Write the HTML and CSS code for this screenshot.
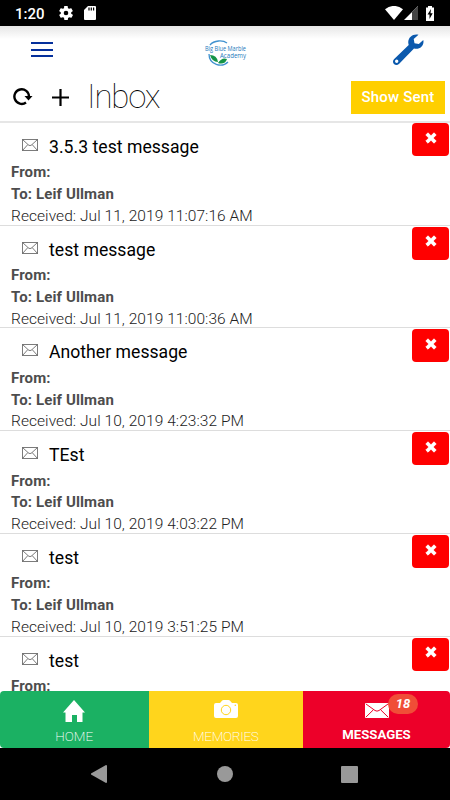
FILE: index.html
```html
<!DOCTYPE html>
<html lang="en">
<head>
  <meta charset="utf-8">
  <title>Inbox</title>
  <meta name="viewport" content="width=device-width, initial-scale=1.0">
  <link rel="stylesheet" href="styles.css">
</head>
<body>
  <svg class="symbols">
    <symbol id="envelope" viewBox="0 0 16 12">
      <path d="M.5.5h15v11H.5zM.5.5 6.5 6Q8 7.3 9.5 6L15.5.5M.5 11.5 5.8 5.6M15.5 11.5 10.2 5.6" fill="none" stroke="currentColor" stroke-width=".65"/>
    </symbol>
    <symbol id="times" viewBox="0 0 12 12">
      <path d="M3 .8 6 3.8 9 .8 11.2 3 8.2 6 11.2 9 9 11.2 6 8.2 3 11.2.8 9 3.8 6 .8 3z" fill="currentColor" stroke="currentColor" stroke-width=".8" stroke-linejoin="round"/>
    </symbol>
  </svg>

  <div class="status-bar">
    <span class="clock">1:20</span>
    <svg class="gear" width="14" height="14" viewBox="2 2 20 20"><path fill="#fff" d="M19.4 13c0-.3.1-.6.1-1s0-.7-.1-1l2.1-1.6c.2-.1.2-.4.1-.6l-2-3.500c-.1-.2-.4-.3-.6-.2l-2.500 1c-.5-.4-1.100-.7-1.700-1l-.4-2.600c0-.2-.2-.4-.5-.4h-4c-.2 0-.4.2-.5.4L9.200 5.100c-.6.2-1.200.6-1.700 1L5 5.100c-.2-.1-.5 0-.6.2l-2 3.500c-.1.2-.1.5.1.6L4.600 11c0 .3-.1.7-.1 1s0 .7.1 1l-2.100 1.600c-.2.1-.2.4-.1.600l2 3.500c.1.2.4.3.6.2l2.500-1c.5.4 1.100.7 1.700 1l.4 2.600c0 .2.2.5.5.5h4c.2 0 .5-.2.5-.5l.4-2.600c.6-.2 1.200-.6 1.700-1l2.500 1c.2.1.5 0 .6-.2l2-3.500c.1-.2.1-.5-.1-.6zM12 15.300a3.300 3.300 0 1 1 0-6.600 3.300 3.300 0 0 1 0 6.600z"/></svg>
    <svg class="sd-card" width="12" height="14" viewBox="0 0 12 14"><path fill="#fff" d="M4 0h7q1 0 1 1v12q0 1-1 1H1q-1 0-1-1V4z"/><path stroke="#000" stroke-width="1.2" d="M5 1.5v3M7.3 1.5v3M9.6 1.5v3"/></svg>
    <div class="status-right">
      <svg width="18" height="14" viewBox="0 0 18 14"><path fill="#fff" d="M0 3.2Q9-3.400 18 3.200L9 14z"/></svg>
      <svg width="14" height="14" viewBox="0 0 14 14"><path fill="#fff" d="M14 0v14H0z"/><path fill="#444" d="M8 6l6-6v14H8z"/></svg>
      <svg class="battery" width="8" height="15" viewBox="0 0 8 15"><path fill="#fff" d="M2 0h4v1.5h2V15H0V1.5h2z"/><path d="M5 3 1.5 8.500h2V13L6.700 7.200H4.500z"/></svg>
    </div>
  </div>

  <header class="top-bar">
    <div class="menu-icon"><span></span><span></span><span></span></div>
    <svg class="logo" width="44" height="28" viewBox="0 0 44 28">
      <path d="M5 4C9-1 18-1 22 2M4 13C4 24 17 27 23 21" fill="none" stroke="#3f91cf" stroke-width="1.300"/>
      <path d="M5 14q7 0 8 7-6 0-8-7zM13 22q4-6 9-4-2 6-9 4z" fill="#159447"/>
      <text x="0" y="9.5" textLength="41" lengthAdjust="spacingAndGlyphs">Big Blue Marble</text>
      <text x="15" y="17" textLength="26" lengthAdjust="spacingAndGlyphs">Academy</text>
    </svg>
    <svg class="wrench" width="32" height="32" viewBox="0 0 32 32">
      <path fill="#0b59ad" fill-rule="evenodd" d="M26.500.8 21.700 5l.8 4.300 4.300.8 4.500-4.200c1.200 5.400-3.300 10-9.300 8.600L7.200 29.800C3.500 33.300-1.300 28.500 2.200 25L16.700 11C14.500 4.500 20.500-.8 26.500.8zM4.700 25.600a1.700 1.700 0 1 0 0 3.400 1.700 1.700 0 0 0 0-3.400z"/>
    </svg>
  </header>

  <div class="toolbar">
    <svg class="refresh" width="20" height="18" viewBox="0 0 20 18"><path d="M13 14.500A7.300 7.300 0 1 1 16 8.500" fill="none" stroke="#000" stroke-width="2.400"/><path d="M11.500 8h8L15.500 12.400z"/></svg>
    <svg class="plus" width="17" height="17" viewBox="0 0 17 17"><path d="M8.500 0v17M0 8.500h17" stroke="#000" stroke-width="2.2"/></svg>
    <h1>Inbox</h1>
    <button class="show-sent">Show Sent</button>
  </div>

  <main class="message-list">
    <div class="message">
      <div class="subject"><svg class="mail"><use href="#envelope"/></svg>3.5.3 test message</div>
      <div class="person">From:</div>
      <div class="person">To: Leif Ullman</div>
      <div class="date">Received: Jul 11, 2019 11:07:16 AM</div>
      <button class="delete"><svg><use href="#times"/></svg></button>
    </div>
    <div class="message">
      <div class="subject"><svg class="mail"><use href="#envelope"/></svg>test message</div>
      <div class="person">From:</div>
      <div class="person">To: Leif Ullman</div>
      <div class="date">Received: Jul 11, 2019 11:00:36 AM</div>
      <button class="delete"><svg><use href="#times"/></svg></button>
    </div>
    <div class="message">
      <div class="subject"><svg class="mail"><use href="#envelope"/></svg>Another message</div>
      <div class="person">From:</div>
      <div class="person">To: Leif Ullman</div>
      <div class="date">Received: Jul 10, 2019 4:23:32 PM</div>
      <button class="delete"><svg><use href="#times"/></svg></button>
    </div>
    <div class="message">
      <div class="subject"><svg class="mail"><use href="#envelope"/></svg>TEst</div>
      <div class="person">From:</div>
      <div class="person">To: Leif Ullman</div>
      <div class="date">Received: Jul 10, 2019 4:03:22 PM</div>
      <button class="delete"><svg><use href="#times"/></svg></button>
    </div>
    <div class="message">
      <div class="subject"><svg class="mail"><use href="#envelope"/></svg>test</div>
      <div class="person">From:</div>
      <div class="person">To: Leif Ullman</div>
      <div class="date">Received: Jul 10, 2019 3:51:25 PM</div>
      <button class="delete"><svg><use href="#times"/></svg></button>
    </div>
    <div class="message">
      <div class="subject"><svg class="mail"><use href="#envelope"/></svg>test</div>
      <div class="person">From:</div>
      <button class="delete"><svg><use href="#times"/></svg></button>
    </div>
  </main>

  <nav class="tabs">
    <div class="tab home">
      <svg width="22" height="22" viewBox="0 0 22 22"><path fill="#fff" d="M11 0 22 12.5h-2.500V22h-5.500v-7H9v7H2.500v-9.500H0z"/></svg>
      <span>HOME</span>
    </div>
    <div class="tab memories">
      <svg width="24" height="18" viewBox="0 0 24 18"><path fill="#fff" d="M2 3h4l2-2.300Q8.500 0 9.500 0h5q1 0 1.500.7L18 3h4q2 0 2 2v11q0 2-2 2H2q-2 0-2-2V5q0-2 2-2z"/><circle cx="12" cy="10" r="4.7" fill="none" stroke="#ffd51c"/><circle cx="21.3" cy="5.2" r=".8" fill="#ffd51c"/></svg>
      <span>MEMORIES</span>
    </div>
    <div class="tab messages">
      <svg width="24" height="15" viewBox="0 0 24 15"><rect width="24" height="15" rx="1" fill="#fff"/><path d="M1 1 10 7.5q2 1.300 4 0L23 1M1 14 8.500 6.700M23 14 15.500 6.700" fill="none" stroke="#ed0029"/></svg>
      <span>MESSAGES</span>
      <i class="badge">18</i>
    </div>
  </nav>

  <div class="android-nav">
    <svg width="16" height="18" viewBox="0 0 16 18"><path fill="#999" d="M15 0q1 0 1 1v16q0 1-1 1L0 9.500v-1z"/></svg>
    <span class="circle"></span>
    <span class="square"></span>
  </div>
</body>
</html>
```
FILE: styles.css
```css
* {
    box-sizing: border-box;
}

body {
    display: flex;
    flex-direction: column;
    height: 800px;
    margin: 0;
    overflow: hidden;
    background: #fff;
    font-family: Roboto, sans-serif;
}

svg {
    display: block;
    flex: none;
}

button {
    padding: 0;
    border: none;
    font-family: inherit;
    color: white;
}

.symbols {
    position: absolute;
    width: 0;
    height: 0;
}

.status-bar {
    display: flex;
    align-items: center;
    flex: none;
    height: 26px;
    padding: 0 16px 0 15px;
    background: #000;
    color: #fff;
}

.clock {
    width: 44px;
    padding-top: 2px;
    font-size: 15px;
    font-weight: 500;
}

.sd-card {
    margin-left: 11px;
}

.status-right {
    display: flex;
    align-items: center;
    gap: 1px;
    margin-left: auto;
}

.battery {
    margin-left: 7px;
}

.top-bar {
    display: flex;
    justify-content: space-between;
    flex: none;
    height: 46px;
    padding: 0 26px 0 31px;
    background: linear-gradient(#e6e6e6, #fff 13px);
}

.menu-icon {
    display: flex;
    flex-direction: column;
    gap: 4.5px;
    width: 22px;
    margin-top: 16px;
}

.menu-icon span {
    height: 2px;
    background: #05309c;
}

.logo {
    margin: 15px 0 0 9px;
    overflow: visible;
}

.logo text {
    font-family: "Open Sans", sans-serif;
    font-size: 6.5px;
    fill: #2478bb;
}

.wrench {
    margin-top: 8px;
}

.toolbar {
    display: flex;
    align-items: center;
    flex: none;
    height: 49.4px;
    padding: 1px 5px 0 13px;
}

.plus {
    margin-left: 19px;
}

h1 {
    margin: 0 0 0 18px;
    font-size: 33px;
    font-weight: 100;
    line-height: 48px;
    letter-spacing: -1.2px;
}

.show-sent {
    width: 94px;
    height: 33px;
    margin-left: auto;
    background-color: #ffcf00;
    font-size: 15px;
    font-weight: 500;
    letter-spacing: 0.2px;
}

.message-list {
    flex: 1;
    min-height: 0;
    overflow: hidden;
}

.message {
    position: relative;
    height: 102.8px;
    padding-left: 11px;
    border-top: 1px solid #ddd;
    color: #4d4d4d;
    font-size: 15px;
    line-height: 21.8px;
}

.message:first-child {
    height: 103.3px;
    border-top: 2px solid #e6e6e6;
}

.message:first-child .subject {
    height: 38.8px;
}

.message:first-child .delete {
    top: 0;
}

.subject {
    display: flex;
    height: 39.3px;
    padding-top: 14px;
    color: #000;
    font-size: 17.6px;
    letter-spacing: 0.03px;
}

.mail {
    width: 16px;
    height: 12px;
    margin: 2px 11px 0 11px;
    color: #333;
}

.person {
    font-weight: 700;
    letter-spacing: 0.13px;
}

.date {
    font-weight: 300;
    font-size: 15.5px;
    letter-spacing: 0.06px;
    color: #222;
}

.delete {
    position: absolute;
    top: 1px;
    right: 1px;
    width: 37px;
    height: 33px;
    border-radius: 4px;
    background-color: #f00;
}

.delete svg {
    width: 12px;
    height: 12px;
    margin: -4px auto 0;
}

.tabs {
    display: grid;
    grid-template-columns: 148.5px 154.5px 147px;
    flex: none;
    height: 57px;
}

.tab {
    position: relative;
    display: flex;
    flex-direction: column;
    align-items: center;
    color: #fff;
    font-size: 13.5px;
    font-weight: 200;
}

.tab span {
    margin-top: auto;
    padding-bottom: 4px;
    line-height: 16px;
}

.home {
    padding-top: 9px;
    border-radius: 4px 0 0 4px;
    background: #1bb163;
}

.memories {
    padding-top: 9px;
    background: #ffd51c;
}

.memories span {
    letter-spacing: -0.3px;
}

.messages {
    padding-top: 12px;
    border-radius: 0 4px 4px 0;
    background: #ed0029;
}

.messages span {
    font-size: 13.2px;
    font-weight: 700;
    padding-bottom: 5px;
}

.badge {
    position: absolute;
    top: 3px;
    left: 85px;
    width: 30px;
    height: 20px;
    border-radius: 10px;
    background: #f04e37;
    font-size: 13px;
    font-weight: 700;
    line-height: 20px;
    text-align: center;
}

.android-nav {
    display: flex;
    align-items: center;
    justify-content: space-between;
    flex: none;
    height: 52px;
    padding: 0 92px 0 91px;
    background: #000;
}

.circle {
    width: 16px;
    height: 16px;
    margin-left: 1px;
    border-radius: 50%;
    background: #999;
}

.square {
    width: 17px;
    height: 17px;
    border-radius: 1px;
    background: #999;
}
```
